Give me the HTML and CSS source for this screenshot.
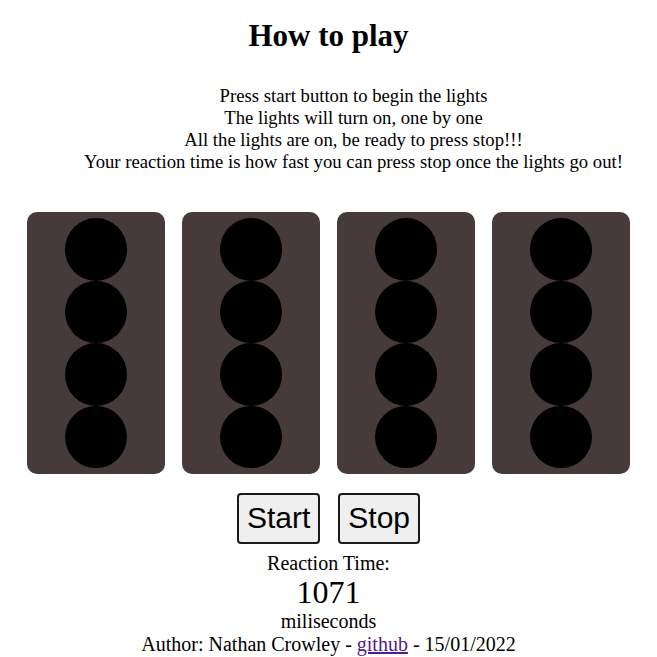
FILE: index.html
```html
<!DOCTYPE html>
<html>
<head>
<meta charset="utf-8">
<title>Lights Out</title>
<link rel="stylesheet" href="styles.css">
</head>
<body>
<h1 class="title">How to play</h1>
<div class="instructions">
  <div>Press start button to begin the lights</div>
  <div>The lights will turn on, one by one</div>
  <div>All the lights are on, be ready to press stop!!!</div>
  <div>Your reaction time is how fast you can press stop once the lights go out!</div>
</div>
<div class="lights">
  <div class="panel"><div class="light"></div><div class="light"></div><div class="light"></div><div class="light"></div></div>
  <div class="panel"><div class="light"></div><div class="light"></div><div class="light"></div><div class="light"></div></div>
  <div class="panel"><div class="light"></div><div class="light"></div><div class="light"></div><div class="light"></div></div>
  <div class="panel"><div class="light"></div><div class="light"></div><div class="light"></div><div class="light"></div></div>
</div>
<div class="controls">
  <button class="btn">Start</button>
  <button class="btn">Stop</button>
</div>
<div class="result">
  <div class="label">Reaction Time:</div>
  <div class="time">1071</div>
  <div class="label">miliseconds</div>
  <div class="label">Author: Nathan Crowley - <a class="link" href="#">github</a> - 15/01/2022</div>
</div>
</body>
</html>
```

FILE: styles.css
```css
html, body {
  margin: 0;
  padding: 0;
  background: #ffffff;
}
body {
  font-family: "Liberation Serif", "Times New Roman", serif;
  color: #000;
  text-align: center;
}
.title {
  font-size: 31px;
  font-weight: bold;
  margin: 17px 0 0;
  line-height: 37px;
}
.instructions {
  font-size: 18.7px;
  line-height: 22px;
  margin-top: 31px;
  padding-left: 50px;
}
.lights {
  display: flex;
  justify-content: center;
  gap: 17px;
  margin-top: 39px;
}
.panel {
  width: 138px;
  height: 262px;
  box-sizing: border-box;
  padding: 6px 0;
  background: #463a3a;
  border-radius: 10px;
  display: flex;
  flex-direction: column;
  align-items: center;
}
.light {
  width: 62px;
  height: 62.5px;
  border-radius: 50%;
  background: #000;
  flex: none;
}
.controls {
  display: flex;
  justify-content: center;
  gap: 18px;
  margin-top: 19px;
}
.btn {
  font-family: "Liberation Sans", Arial, sans-serif;
  font-size: 30px;
  padding: 6px 8px;
  border: 2px solid #1a1a1a;
  border-radius: 4px;
  background: #efefef;
  color: #000;
  line-height: 34.5px;
}
.result {
  margin-top: 8px;
}
.label {
  font-size: 20px;
  line-height: 23px;
}
.time {
  font-size: 32px;
  line-height: 35px;
}
.link {
  color: #551a8b;
}
```
